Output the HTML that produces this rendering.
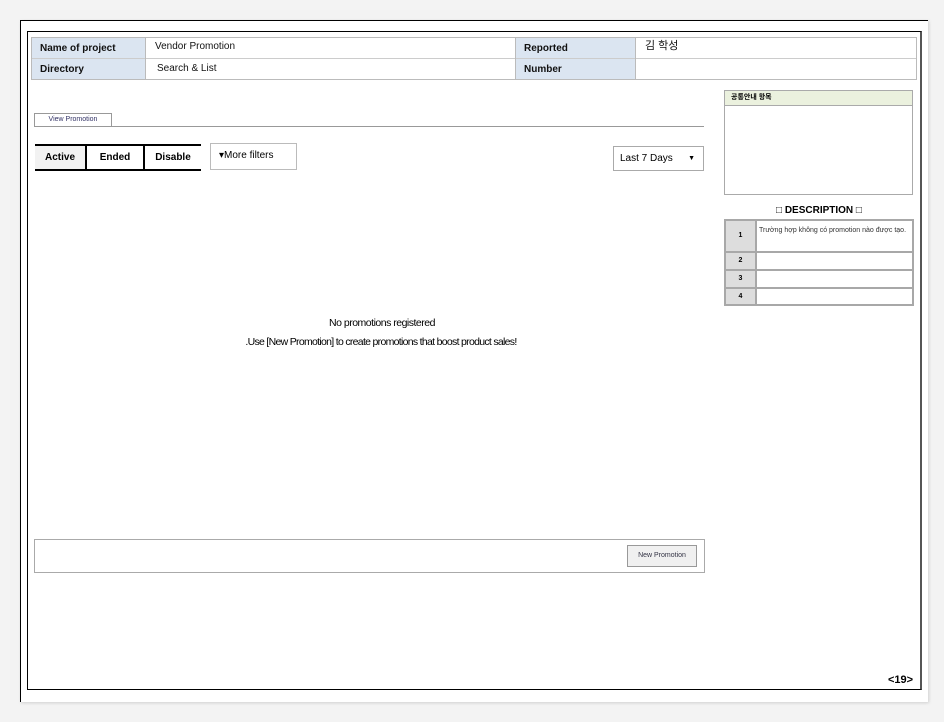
<!DOCTYPE html>
<html><head><meta charset="utf-8"><style>
body{margin:0;background:#f3f3f3;width:944px;height:722px;position:relative;font-family:"Liberation Sans","Noto Sans CJK KR",sans-serif;overflow:hidden}
.a{position:absolute;box-sizing:border-box}
.paper{left:20px;top:20px;width:908px;height:682px;background:#fff;border-top:1px solid #000;border-left:1px solid #000;box-shadow:1px 1px 3px rgba(0,0,0,.15)}
.inner{left:27px;top:31px;width:895px;height:659px;border:1px solid #000;border-right:2px solid #555}
.lab{background:#dbe5f1;font-weight:bold;font-size:10px;color:#111;padding-left:8px;line-height:22px}
.val{font-size:10px;color:#111;padding-left:10px;line-height:19px}
.tab{font-size:10px;font-weight:bold;text-align:center;line-height:23px;border-top:2px solid #000;border-bottom:2px solid #000}
</style></head><body>
<div class="a paper"></div>
<div class="a inner"></div>
<div class="a" style="left:31px;top:37px;width:886px;height:43px;border:1px solid #bbb"></div>
<div class="a" style="left:32px;top:58px;width:884px;height:1px;background:#ccc"></div>
<div class="a lab" style="left:32px;top:38px;width:113px;height:20px">Name of project</div>
<div class="a lab" style="left:32px;top:59px;width:113px;height:20px">Directory</div>
<div class="a" style="left:145px;top:38px;width:1px;height:41px;background:#bbb"></div>
<div class="a val" style="left:145px;top:37px">Vendor Promotion</div>
<div class="a val" style="left:147px;top:59px">Search &amp; List</div>
<div class="a" style="left:515px;top:38px;width:1px;height:41px;background:#bbb"></div>
<div class="a lab" style="left:516px;top:38px;width:119px;height:20px">Reported</div>
<div class="a lab" style="left:516px;top:59px;width:119px;height:20px">Number</div>
<div class="a" style="left:635px;top:38px;width:1px;height:41px;background:#bbb"></div>
<div class="a val" style="left:635px;top:37px;font-size:11px;line-height:18px">김 학성</div>

<div class="a" style="left:34px;top:113px;width:78px;height:14px;border:1px solid #999;border-bottom:none;font-size:7px;color:#336;text-align:center;line-height:12px">View Promotion</div>
<div class="a" style="left:34px;top:126px;width:670px;height:1px;background:#999"></div>

<div class="a tab" style="left:35px;top:144px;width:50px;background:#f2f2f2">Active</div>
<div class="a tab" style="left:85px;top:144px;width:58px;border-left:2px solid #000">Ended</div>
<div class="a tab" style="left:143px;top:144px;width:58px;border-left:2px solid #000">Disable</div>
<div class="a" style="left:210px;top:143px;width:87px;height:27px;border:1px solid #bbb;font-size:10px;line-height:24px;padding-left:8px">▾More filters</div>
<div class="a" style="left:613px;top:146px;width:91px;height:25px;border:1px solid #aaa;font-size:10px;line-height:23px;padding-left:6px">Last 7 Days<span style="position:absolute;right:8px;font-size:7px">▼</span></div>

<div class="a" style="left:0;top:317px;width:764px;text-align:center;font-size:10.5px;letter-spacing:-.5px">No promotions registered</div>
<div class="a" style="left:0;top:336px;width:762px;text-align:center;font-size:10.5px;letter-spacing:-.7px">.Use [New Promotion] to create promotions that boost product sales!</div>

<div class="a" style="left:34px;top:539px;width:671px;height:34px;border:1px solid #aaa"></div>
<div class="a" style="left:627px;top:545px;width:70px;height:22px;border:1px solid #999;background:#f0f0f0;font-size:7px;text-align:center;line-height:20px;color:#334">New Promotion</div>

<div class="a" style="left:724px;top:90px;width:189px;height:105px;border:1px solid #aaa"></div>
<div class="a" style="left:725px;top:91px;width:187px;height:15px;background:#ebf1de;border-bottom:1px solid #aaa;font-size:7px;font-weight:bold;line-height:14px;padding-left:6px">공통안내 항목</div>
<div class="a" style="left:724px;top:205px;width:190px;text-align:center;font-size:10px;font-weight:bold">□ DESCRIPTION □</div>
<div class="a" style="left:724px;top:219px;width:190px;height:87px;background:#a8a8a8"></div>
<div class="a" style="left:726px;top:221px;width:29px;height:30px;background:#ddd;font-size:7px;font-weight:bold;text-align:center;line-height:30px">1</div>
<div class="a" style="left:757px;top:221px;width:155px;height:30px;background:#fff;font-size:7px;color:#333;padding:3px 2px;line-height:13px">Trường hợp không có promotion nào được tạo.</div>
<div class="a" style="left:726px;top:253px;width:29px;height:16px;background:#ddd;font-size:7px;font-weight:bold;text-align:center;line-height:16px">2</div>
<div class="a" style="left:757px;top:253px;width:155px;height:16px;background:#fff"></div>
<div class="a" style="left:726px;top:271px;width:29px;height:16px;background:#ddd;font-size:7px;font-weight:bold;text-align:center;line-height:16px">3</div>
<div class="a" style="left:757px;top:271px;width:155px;height:16px;background:#fff"></div>
<div class="a" style="left:726px;top:289px;width:29px;height:15px;background:#ddd;font-size:7px;font-weight:bold;text-align:center;line-height:15px">4</div>
<div class="a" style="left:757px;top:289px;width:155px;height:15px;background:#fff"></div>

<div class="a" style="left:888px;top:674px;font-size:11px;font-weight:bold">&lt;19&gt;</div>
</body></html>
